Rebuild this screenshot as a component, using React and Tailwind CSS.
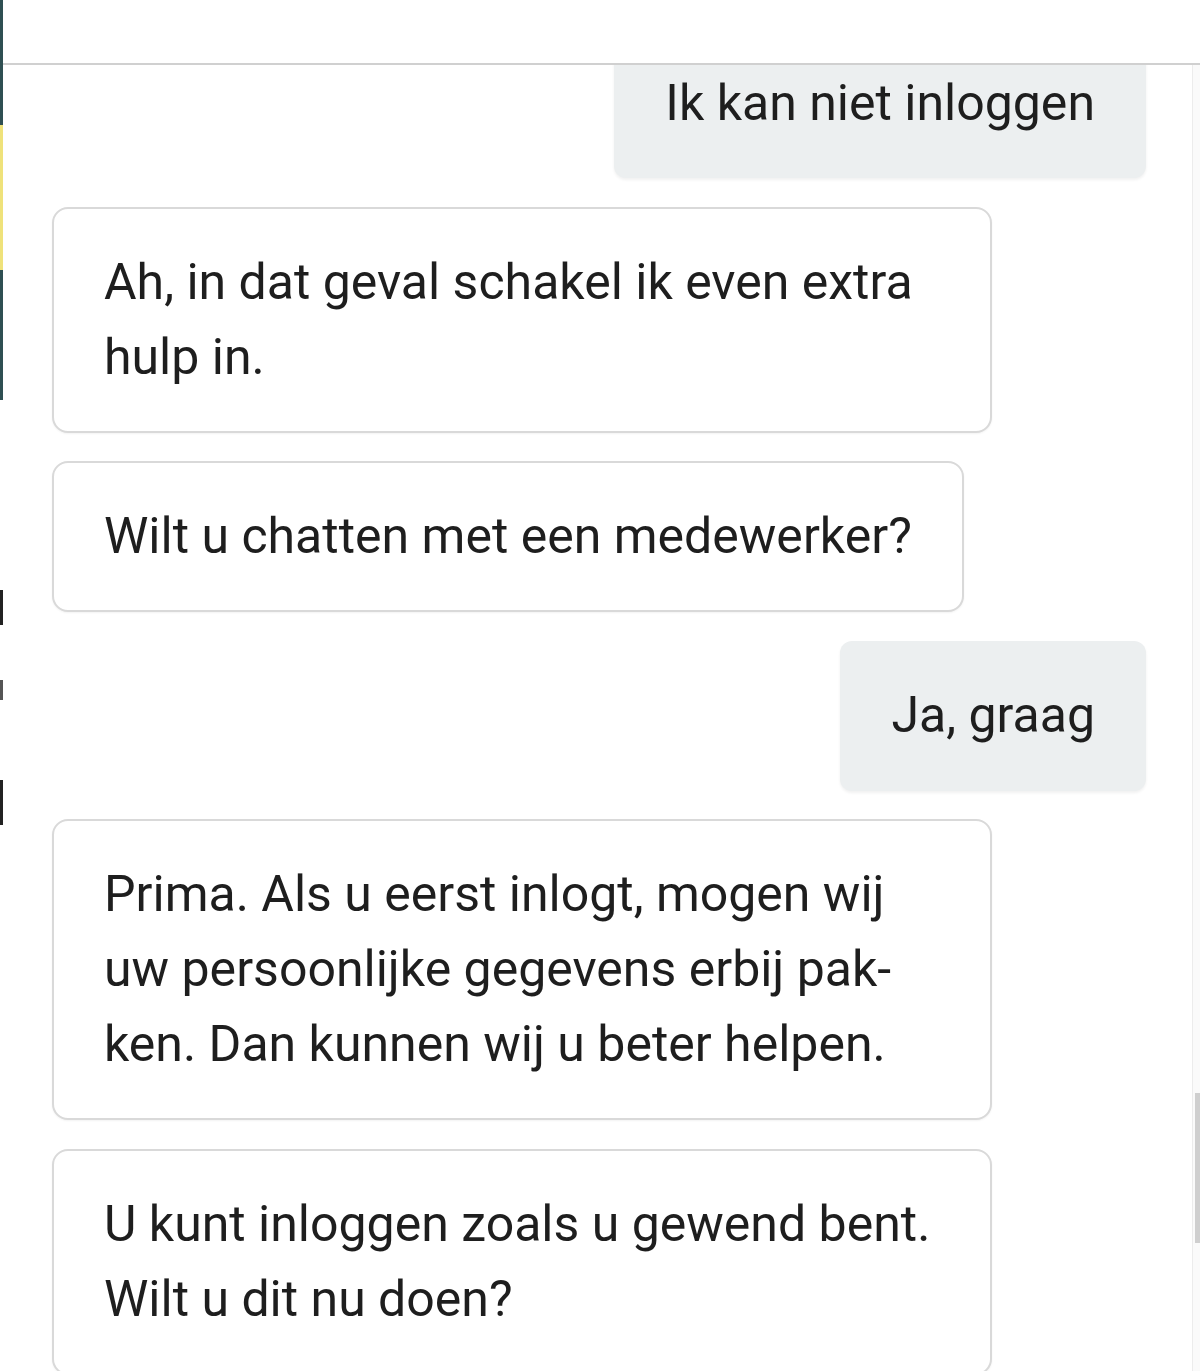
const messages = [
  { from: 'user', text: 'Ik kan niet inloggen' },
  { from: 'bot', text: 'Ah, in dat geval schakel ik even extra hulp in.' },
  { from: 'bot', text: 'Wilt u chatten met een medewerker?' },
  { from: 'user', text: 'Ja, graag' },
  {
    from: 'bot',
    text: 'Prima. Als u eerst inlogt, mogen wij uw persoonlijke gegevens erbij pak\u00ADken. Dan kunnen wij u beter helpen.',
  },
  { from: 'bot', text: 'U kunt inloggen zoals u gewend bent. Wilt u dit nu doen?' },
];

function Bubble({ from, text }) {
  if (from === 'user') {
    return (
      <div className="self-end rounded-[12px] bg-[#eceff0] px-[51px] py-[37.5px] shadow-[0_2px_3px_rgba(0,0,0,0.06)]">
        {text}
      </div>
    );
  }
  return (
    <div className="self-start max-w-[940px] rounded-[16px] border-2 border-[#d9d9d9] bg-white px-[50px] py-[36px] shadow-[0_1px_2px_rgba(0,0,0,0.05)]">
      {text}
    </div>
  );
}

export default function App() {
  return (
    <div className="flex h-[1371px] w-[1200px] overflow-hidden bg-white font-['Roboto',sans-serif] text-[50px] leading-[75px] text-[#1e1e1e]">
      {/* edge of the window behind */}
      <div className="flex w-[3px] shrink-0 flex-col">
        <div className="h-[125px] bg-[#2f4f52]" />
        <div className="h-[145px] bg-[#efe27a]" />
        <div className="h-[130px] bg-[#2f4f52]" />
        <div className="h-[190px] bg-white" />
        <div className="h-[35px] bg-[#222]" />
        <div className="h-[55px] bg-white" />
        <div className="h-[20px] bg-[#555]" />
        <div className="h-[80px] bg-white" />
        <div className="h-[45px] bg-[#222]" />
      </div>

      <div className="flex min-w-0 flex-1 flex-col">
        <header className="h-[65px] shrink-0 border-b-2 border-[#d0d0d0] bg-white" />

        <div className="flex min-h-0 flex-1">
          <main className="flex min-w-0 flex-1 flex-col overflow-hidden pl-[49px] pr-[46px]">
            <div className="-mt-[37px] flex flex-col gap-[28.5px]">
              {messages.map((m, i) => (
                <Bubble key={i} {...m} />
              ))}
            </div>
          </main>

          {/* scrollbar */}
          <div className="flex w-[8px] shrink-0 flex-col border-l border-[#ececec] bg-[#fafafa]">
            <div className="h-[1028px]" />
            <div className="ml-[2px] h-[150px] w-[5px] bg-[#cfcfcf]" />
          </div>
        </div>
      </div>
    </div>
  );
}
